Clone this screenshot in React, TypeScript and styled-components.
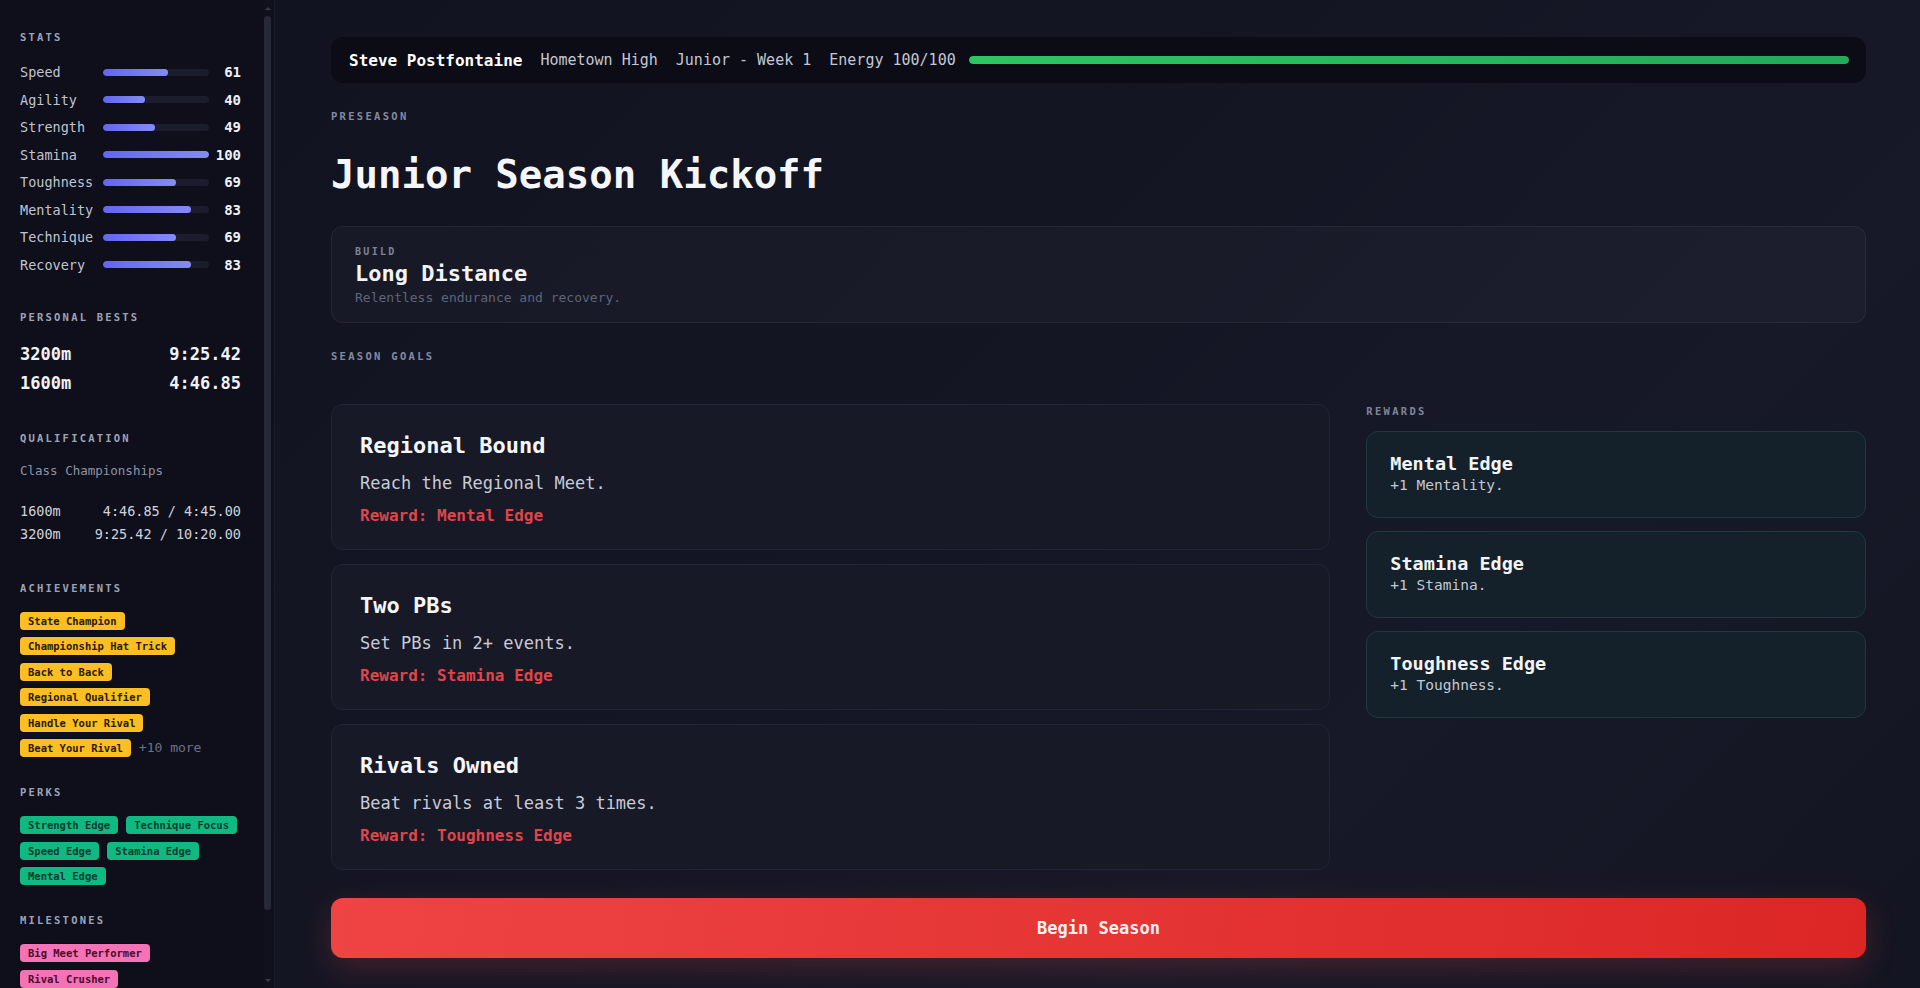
import React from 'react';
import styled, { createGlobalStyle } from 'styled-components';

const mono = `"DejaVu Sans Mono", "Liberation Mono", monospace`;

const GlobalStyle = createGlobalStyle`
  * { box-sizing: border-box; }
  html, body { margin: 0; padding: 0; height: 100%; background: #12131f; overflow: hidden; }
  body { font-family: ${mono}; color: #e6e8ef; }
  #root { height: 100%; }
`;

const Shell = styled.div`
  display: flex;
  height: 100vh;
  width: 100%;
`;

const Sidebar = styled.aside`
  width: 275px;
  flex: none;
  height: 100vh;
  display: flex;
  background: #0e0f1b;
  border-right: 1px solid #1a1b28;
`;

const SideScroll = styled.div`
  flex: 1;
  min-width: 0;
  height: 100%;
  overflow-y: auto;
  padding: 30px 23px 76px 20px;
  scrollbar-width: none;
  &::-webkit-scrollbar { display: none; }
`;

const ScrollRail = styled.div`
  width: 10px;
  flex: none;
  display: flex;
  flex-direction: column;
  align-items: center;
  padding-right: 3px;
  background: #10111d;
`;

const ScrollArrow = styled.div<{ $down?: boolean }>`
  flex: none;
  height: 16px;
  display: flex;
  align-items: center;
  justify-content: center;
  &::before {
    content: '';
    border-left: 3px solid transparent;
    border-right: 3px solid transparent;
    ${(p) => (p.$down ? 'border-top: 3px solid #3a3c4e;' : 'border-bottom: 3px solid #3a3c4e;')}
  }
`;

const ScrollThumb = styled.div`
  flex: none;
  width: 7px;
  height: 894px;
  border-radius: 4px;
  background: #272938;
`;

const RailSpacer = styled.div`
  flex: 1;
`;

const Section = styled.section<{ $extra?: number }>`
  margin-bottom: ${(p) => 28 + (p.$extra ?? 0)}px;
`;

const SideLabel = styled.div`
  font-size: 10.5px;
  line-height: 14px;
  font-weight: 700;
  letter-spacing: 2.2px;
  color: #9ea3b6;
  text-transform: uppercase;
`;

const StatGrid = styled.div`
  display: grid;
  grid-template-columns: 77px 1fr 26px;
  column-gap: 6px;
  row-gap: 7.5px;
  margin-top: 18px;
  align-items: center;
`;

const StatName = styled.span`
  font-size: 13.5px;
  line-height: 20px;
  color: #c0c4d0;
  white-space: nowrap;
`;

const StatTrack = styled.div`
  height: 7px;
  border-radius: 4px;
  background: #1b1c2c;
  overflow: hidden;
`;

const StatFill = styled.div`
  height: 100%;
  border-radius: 4px;
  background: linear-gradient(90deg, #6366f1, #858af6);
`;

const StatValue = styled.span`
  font-size: 14px;
  line-height: 20px;
  font-weight: 700;
  color: #eef0f5;
  text-align: right;
  white-space: nowrap;
`;

const PairList = styled.div<{ $top: number; $gap: number }>`
  display: flex;
  flex-direction: column;
  gap: ${(p) => p.$gap}px;
  margin-top: ${(p) => p.$top}px;
`;

const PairRow = styled.div<{ $size: number; $line: number; $bold?: boolean; $color: string }>`
  display: flex;
  justify-content: space-between;
  font-size: ${(p) => p.$size}px;
  line-height: ${(p) => p.$line}px;
  font-weight: ${(p) => (p.$bold ? 700 : 400)};
  color: ${(p) => p.$color};
  white-space: nowrap;
`;

const SubNote = styled.div`
  margin-top: 17px;
  font-size: 12.5px;
  line-height: 18px;
  color: #8e93a6;
`;

const BadgeWrap = styled.div`
  display: flex;
  flex-wrap: wrap;
  align-items: center;
  gap: 7.5px 8px;
  margin-top: 17px;
`;

const badgeColors = {
  gold: { bg: '#fbbf24', fg: '#2a1a00' },
  green: { bg: '#10b981', fg: '#053d2e' },
  pink: { bg: '#f472b6', fg: '#4c0b2b' },
};

const Badge = styled.span<{ $tone: keyof typeof badgeColors }>`
  display: inline-block;
  height: 18px;
  line-height: 18px;
  padding: 0 8px;
  border-radius: 4px;
  font-size: 10.5px;
  font-weight: 700;
  white-space: nowrap;
  background: ${(p) => badgeColors[p.$tone].bg};
  color: ${(p) => badgeColors[p.$tone].fg};
  box-shadow: 0 0 0 1px rgba(0, 0, 0, 0.25);
`;

const MoreNote = styled.span`
  font-size: 13px;
  line-height: 18px;
  color: #6d7185;
`;

const Main = styled.main`
  flex: 1;
  min-width: 0;
  height: 100vh;
  overflow: hidden;
  padding: 37px 54px 0 56px;
  background: linear-gradient(135deg, #121320 0%, #151624 45%, #181928 70%, #141522 100%);
`;

const TopBar = styled.header`
  display: flex;
  align-items: center;
  gap: 18px;
  height: 46px;
  padding: 0 17px 0 18px;
  background: #0b0c15;
  border-radius: 12px;
`;

const PlayerName = styled.span`
  font-size: 16px;
  font-weight: 700;
  color: #ffffff;
  white-space: nowrap;
`;

const TopMeta = styled.span`
  font-size: 15px;
  color: #c3c7d4;
  white-space: nowrap;
`;

const EnergyTrack = styled.div`
  flex: 1;
  height: 8px;
  margin-left: -5px;
  border-radius: 4px;
  background: #1d1f2b;
  overflow: hidden;
`;

const EnergyFill = styled.div`
  height: 100%;
  border-radius: 4px;
  background: linear-gradient(90deg, #2cc662, #23a95a);
`;

const Eyebrow = styled.div<{ $top: number; $color?: string }>`
  margin-top: ${(p) => p.$top}px;
  font-size: 10.5px;
  line-height: 14px;
  font-weight: 700;
  letter-spacing: 2.3px;
  color: ${(p) => p.$color ?? '#848aa0'};
  text-transform: uppercase;
`;

const Title = styled.h1`
  margin: 28px 0 0;
  font-size: 39px;
  line-height: 48px;
  font-weight: 700;
  color: #f5f6fa;
`;

const BuildCard = styled.div`
  margin-top: 27px;
  padding: 19px 23px 15px;
  background: rgba(255, 255, 255, 0.022);
  border: 1px solid rgba(255, 255, 255, 0.06);
  border-radius: 12px;
`;

const BuildLabel = styled.div`
  font-size: 10px;
  line-height: 12px;
  font-weight: 700;
  letter-spacing: 2.3px;
  color: #7d8296;
`;

const BuildName = styled.div`
  margin-top: 3px;
  font-size: 22px;
  line-height: 26px;
  font-weight: 700;
  color: #f3f4f8;
`;

const BuildDesc = styled.div`
  margin-top: 2px;
  font-size: 13px;
  line-height: 18px;
  color: #5f6479;
`;

const GoalsGrid = styled.div`
  margin-top: 41px;
  display: grid;
  grid-template-columns: 2fr 1fr;
  column-gap: 36px;
  align-items: start;
`;

const GoalList = styled.div`
  display: flex;
  flex-direction: column;
  gap: 14px;
`;

const GoalCard = styled.div`
  padding: 27px 28px 22.5px;
  background: #181926;
  border: 1px solid #222436;
  border-radius: 12px;
`;

const GoalTitle = styled.div`
  font-size: 22px;
  line-height: 27px;
  font-weight: 700;
  color: #f5f6fa;
`;

const GoalDesc = styled.div`
  margin-top: 12px;
  font-size: 17px;
  line-height: 25px;
  color: #c8cbd8;
`;

const GoalReward = styled.div`
  margin-top: 8.5px;
  font-size: 16px;
  line-height: 22px;
  font-weight: 700;
  color: #df4549;
`;

const RewardColumn = styled.div`
  display: flex;
  flex-direction: column;
`;

const RewardList = styled.div`
  margin-top: 13px;
  display: flex;
  flex-direction: column;
  gap: 13px;
`;

const RewardCard = styled.div`
  padding: 21px 23px 22px;
  background: #14202a;
  border: 1px solid #1e3a3c;
  border-radius: 12px;
`;

const RewardName = styled.div`
  font-size: 18.5px;
  line-height: 22px;
  font-weight: 700;
  color: #f2f4f7;
`;

const RewardDesc = styled.div`
  font-size: 14.5px;
  line-height: 20px;
  color: #c4c8d4;
`;

const BeginButton = styled.button`
  display: block;
  width: 100%;
  height: 60px;
  margin-top: 28px;
  border: none;
  border-radius: 12px;
  background: linear-gradient(100deg, #ef4444 0%, #e53535 50%, #dc2626 100%);
  color: #fff1f1;
  font-family: ${mono};
  font-size: 17px;
  font-weight: 700;
  cursor: pointer;
  box-shadow: 0 10px 30px rgba(239, 68, 68, 0.22);
`;

const stats: [string, number][] = [
  ['Speed', 61],
  ['Agility', 40],
  ['Strength', 49],
  ['Stamina', 100],
  ['Toughness', 69],
  ['Mentality', 83],
  ['Technique', 69],
  ['Recovery', 83],
];

const achievements = [
  'State Champion',
  'Championship Hat Trick',
  'Back to Back',
  'Regional Qualifier',
  'Handle Your Rival',
  'Beat Your Rival',
];

const perks = ['Strength Edge', 'Technique Focus', 'Speed Edge', 'Stamina Edge', 'Mental Edge'];
const milestones = ['Big Meet Performer', 'Rival Crusher'];

const goals = [
  { title: 'Regional Bound', desc: 'Reach the Regional Meet.', reward: 'Mental Edge' },
  { title: 'Two PBs', desc: 'Set PBs in 2+ events.', reward: 'Stamina Edge' },
  { title: 'Rivals Owned', desc: 'Beat rivals at least 3 times.', reward: 'Toughness Edge' },
];

const rewards = [
  { name: 'Mental Edge', desc: '+1 Mentality.' },
  { name: 'Stamina Edge', desc: '+1 Stamina.' },
  { name: 'Toughness Edge', desc: '+1 Toughness.' },
];

export default function App() {
  return (
    <>
      <GlobalStyle />
      <Shell>
        <Sidebar>
          <SideScroll>
            <Section $extra={7}>
              <SideLabel>Stats</SideLabel>
              <StatGrid>
                {stats.map(([name, v]) => (
                  <React.Fragment key={name}>
                    <StatName>{name}</StatName>
                    <StatTrack>
                      <StatFill style={{ width: `${v}%` }} />
                    </StatTrack>
                    <StatValue>{v}</StatValue>
                  </React.Fragment>
                ))}
              </StatGrid>
            </Section>

            <Section $extra={8}>
              <SideLabel>Personal Bests</SideLabel>
              <PairList $top={18} $gap={5}>
                <PairRow $size={17} $line={24} $bold $color="#f1f2f6">
                  <span>3200m</span>
                  <span>9:25.42</span>
                </PairRow>
                <PairRow $size={17} $line={24} $bold $color="#f1f2f6">
                  <span>1600m</span>
                  <span>4:46.85</span>
                </PairRow>
              </PairList>
            </Section>

            <Section $extra={9}>
              <SideLabel>Qualification</SideLabel>
              <SubNote>Class Championships</SubNote>
              <PairList $top={21} $gap={3}>
                <PairRow $size={13.5} $line={20} $color="#d0d3de">
                  <span>1600m</span>
                  <span>4:46.85 / 4:45.00</span>
                </PairRow>
                <PairRow $size={13.5} $line={20} $color="#d0d3de">
                  <span>3200m</span>
                  <span>9:25.42 / 10:20.00</span>
                </PairRow>
              </PairList>
            </Section>

            <Section>
              <SideLabel>Achievements</SideLabel>
              <BadgeWrap>
                {achievements.map((a) => (
                  <Badge key={a} $tone="gold">
                    {a}
                  </Badge>
                ))}
                <MoreNote>+10 more</MoreNote>
              </BadgeWrap>
            </Section>

            <Section>
              <SideLabel>Perks</SideLabel>
              <BadgeWrap>
                {perks.map((p) => (
                  <Badge key={p} $tone="green">
                    {p}
                  </Badge>
                ))}
              </BadgeWrap>
            </Section>

            <Section>
              <SideLabel>Milestones</SideLabel>
              <BadgeWrap>
                {milestones.map((m) => (
                  <Badge key={m} $tone="pink">
                    {m}
                  </Badge>
                ))}
              </BadgeWrap>
            </Section>
          </SideScroll>
          <ScrollRail aria-hidden="true">
            <ScrollArrow />
            <ScrollThumb />
            <RailSpacer />
            <ScrollArrow $down />
          </ScrollRail>
        </Sidebar>

        <Main>
          <TopBar>
            <PlayerName>Steve Postfontaine</PlayerName>
            <TopMeta>Hometown High</TopMeta>
            <TopMeta>Junior - Week 1</TopMeta>
            <TopMeta>Energy 100/100</TopMeta>
            <EnergyTrack>
              <EnergyFill style={{ width: '100%' }} />
            </EnergyTrack>
          </TopBar>

          <Eyebrow $top={26}>Preseason</Eyebrow>
          <Title>Junior Season Kickoff</Title>

          <BuildCard>
            <BuildLabel>BUILD</BuildLabel>
            <BuildName>Long Distance</BuildName>
            <BuildDesc>Relentless endurance and recovery.</BuildDesc>
          </BuildCard>

          <Eyebrow $top={26}>Season Goals</Eyebrow>

          <GoalsGrid>
            <GoalList>
              {goals.map((g) => (
                <GoalCard key={g.title}>
                  <GoalTitle>{g.title}</GoalTitle>
                  <GoalDesc>{g.desc}</GoalDesc>
                  <GoalReward>Reward: {g.reward}</GoalReward>
                </GoalCard>
              ))}
            </GoalList>
            <RewardColumn>
              <Eyebrow $top={0} $color="#7f8599">Rewards</Eyebrow>
              <RewardList>
                {rewards.map((r) => (
                  <RewardCard key={r.name}>
                    <RewardName>{r.name}</RewardName>
                    <RewardDesc>{r.desc}</RewardDesc>
                  </RewardCard>
                ))}
              </RewardList>
            </RewardColumn>
          </GoalsGrid>

          <BeginButton>Begin Season</BeginButton>
        </Main>
      </Shell>
    </>
  );
}
